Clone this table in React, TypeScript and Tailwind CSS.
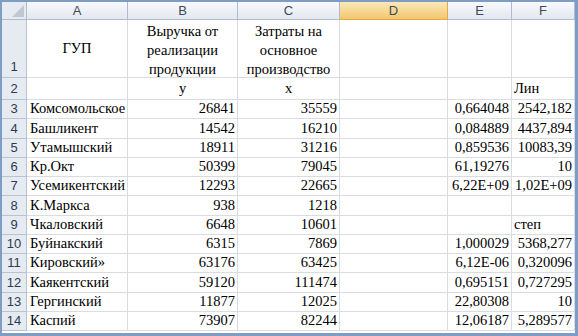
const serif = { fontFamily: '"Liberation Serif", "Times New Roman", serif' };

type Row = {
  n: number;
  a?: string;
  b?: string;
  c?: string;
  e?: string;
  f?: string;
  fLeft?: boolean;
};

const rows: Row[] = [
  { n: 3, a: "Комсомольское", b: "26841", c: "35559", e: "0,664048", f: "2542,182" },
  { n: 4, a: "Башликент", b: "14542", c: "16210", e: "0,084889", f: "4437,894" },
  { n: 5, a: "Утамышский", b: "18911", c: "31216", e: "0,859536", f: "10083,39" },
  { n: 6, a: "Кр.Окт", b: "50399", c: "79045", e: "61,19276", f: "10" },
  { n: 7, a: "Усемикентский", b: "12293", c: "22665", e: "6,22E+09", f: "1,02E+09" },
  { n: 8, a: "К.Маркса", b: "938", c: "1218" },
  { n: 9, a: "Чкаловский", b: "6648", c: "10601", f: "степ", fLeft: true },
  { n: 10, a: "Буйнакский", b: "6315", c: "7869", e: "1,000029", f: "5368,277" },
  { n: 11, a: "Кировский»", b: "63176", c: "63425", e: "6,12E-06", f: "0,320096" },
  { n: 12, a: "Каякентский", b: "59120", c: "111474", e: "0,695151", f: "0,727295" },
  { n: 13, a: "Гергинский", b: "11877", c: "12025", e: "22,80308", f: "10" },
  { n: 14, a: "Каспий", b: "73907", c: "82244", e: "12,06187", f: "5,289577" },
];

const cell = "border-r border-b border-[#d9dde3] flex items-center overflow-hidden whitespace-nowrap text-[14.5px] text-black";
const colHead =
  "border-r border-b border-[#aebccd] bg-gradient-to-b from-[#f7f9fc] to-[#e3e8ef] flex items-center justify-center text-[13px] text-[#3d4a5c]";
const rowHead =
  "border-r border-b border-[#b6c3d3] bg-[#e6ebf2] flex justify-center text-[13px] text-[#2c3b52]";

function ColHead({ label, active }: { label: string; active?: boolean }) {
  return (
    <div
      className={
        active
          ? "border-r border-b border-[#e8a845] bg-gradient-to-b from-[#fbe9b8] to-[#f3c66c] flex items-center justify-center text-[13px] text-[#3d4a5c]"
          : colHead
      }
      style={{ fontFamily: '"Liberation Sans", Arial, sans-serif' }}
    >
      {label}
    </div>
  );
}

function RowNum({ n, bottom }: { n: number; bottom?: boolean }) {
  return (
    <div
      className={rowHead + (bottom ? " items-end pb-[1px]" : " items-center")}
      style={{ fontFamily: '"Liberation Sans", Arial, sans-serif' }}
    >
      {n}
    </div>
  );
}

export default function App() {
  return (
    <div className="w-[578px] h-[336px] bg-white border-l-2 border-t-2 border-r-[3px] border-b-[3px] border-[#7f9cc4] overflow-hidden">
      <div
        className="grid grid-cols-[25px_101px_110px_102px_108px_64px_63px] grid-rows-[18px_58px_22px_repeat(12,19.25px)]"
        style={serif}
      >
        {/* header row */}
        <div className="border-r border-b border-[#aebccd] bg-[#e6ebf2] relative">
          <div className="absolute right-[2px] bottom-[2px] w-0 h-0 border-l-[12px] border-l-transparent border-b-[12px] border-b-[#c0c7d1]" />
        </div>
        <ColHead label="A" />
        <ColHead label="B" />
        <ColHead label="C" />
        <ColHead label="D" active />
        <ColHead label="E" />
        <ColHead label="F" />

        {/* row 1 */}
        <RowNum n={1} bottom />
        <div className={cell + " justify-center"}>ГУП</div>
        <div className={cell + " justify-center text-center whitespace-normal leading-[19px] pt-[3px]"}>
          Выручка от
          <br />
          реализации
          <br />
          продукции
        </div>
        <div className={cell + " justify-center text-center whitespace-normal leading-[19px] pt-[3px]"}>
          Затраты на
          <br />
          основное
          <br />
          производство
        </div>
        <div className={cell} />
        <div className={cell} />
        <div className={cell} />

        {/* row 2 */}
        <RowNum n={2} />
        <div className={cell} />
        <div className={cell + " justify-center"}>у</div>
        <div className={cell + " justify-center"}>х</div>
        <div className={cell} />
        <div className={cell} />
        <div className={cell + " pl-[2px]"}>Лин</div>

        {rows.map((r) => (
          <div key={r.n} className="contents">
            <RowNum n={r.n} />
            <div className={cell + " pl-[3px]"}>{r.a}</div>
            <div className={cell + " justify-end pr-[2px]"}>{r.b}</div>
            <div className={cell + " justify-end pr-[2px]"}>{r.c}</div>
            <div className={cell} />
            <div className={cell + " justify-end pr-[2px]"}>{r.e}</div>
            <div className={cell + (r.fLeft ? " pl-[2px]" : " justify-end pr-[2px]")}>{r.f}</div>
          </div>
        ))}
      </div>
    </div>
  );
}
